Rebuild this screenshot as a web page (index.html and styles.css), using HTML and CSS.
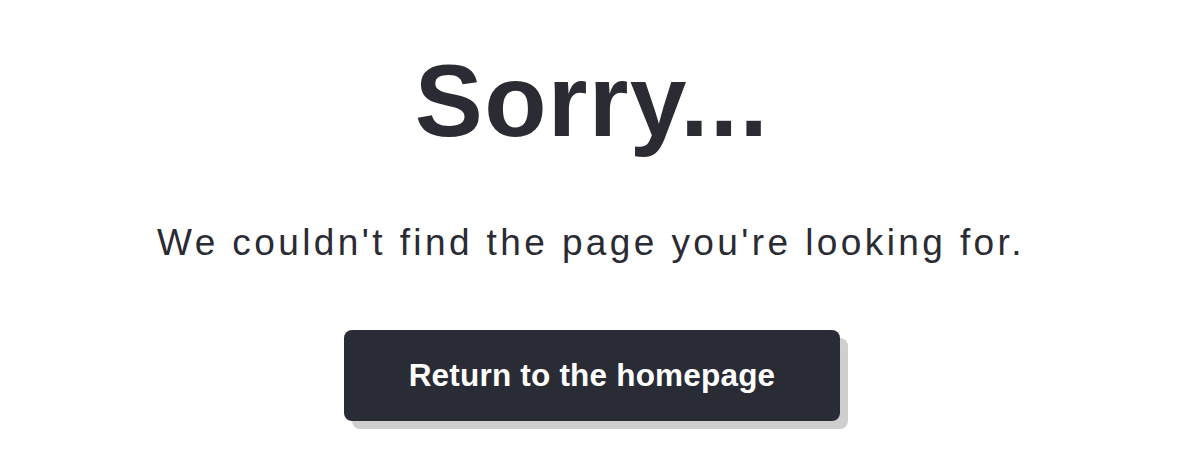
FILE: index.html
```html
<!DOCTYPE html>
<html>
<head>
  <title>Page not found</title>
  <link rel="stylesheet" href="styles.css">
</head>
<body>
  <div class="notfound">
    <h1>Sorry...</h1>
    <p>We couldn't find the page you're looking for.</p>
    <a class="home-btn" href="#">Return to the homepage</a>
  </div>
</body>
</html>
```

FILE: styles.css
```css
body { margin: 0; font-family: "Liberation Sans", Arial, sans-serif; color: #2a2b33; background: #fff; }
.notfound { display: flex; flex-direction: column; align-items: center; padding: 43px 0 44px; }
h1 { margin: 0 0 0 -4px; font-size: 102px; font-weight: bold; letter-spacing: 1.3px; line-height: 1.15; }
p { margin: 61px 0 0 -6px; font-size: 37px; letter-spacing: 3.4px; line-height: 1.2; }
.home-btn {
  margin: 64px 0 0 -4px; width: 496px; height: 91px; display: flex; align-items: center; justify-content: center;
  background: #2a2c35; color: #fff; font-size: 31.5px; font-weight: bold; letter-spacing: 0.2px; text-decoration: none;
  border-radius: 8px; box-shadow: 8px 8px 0 #cfcfcf;
}
```
